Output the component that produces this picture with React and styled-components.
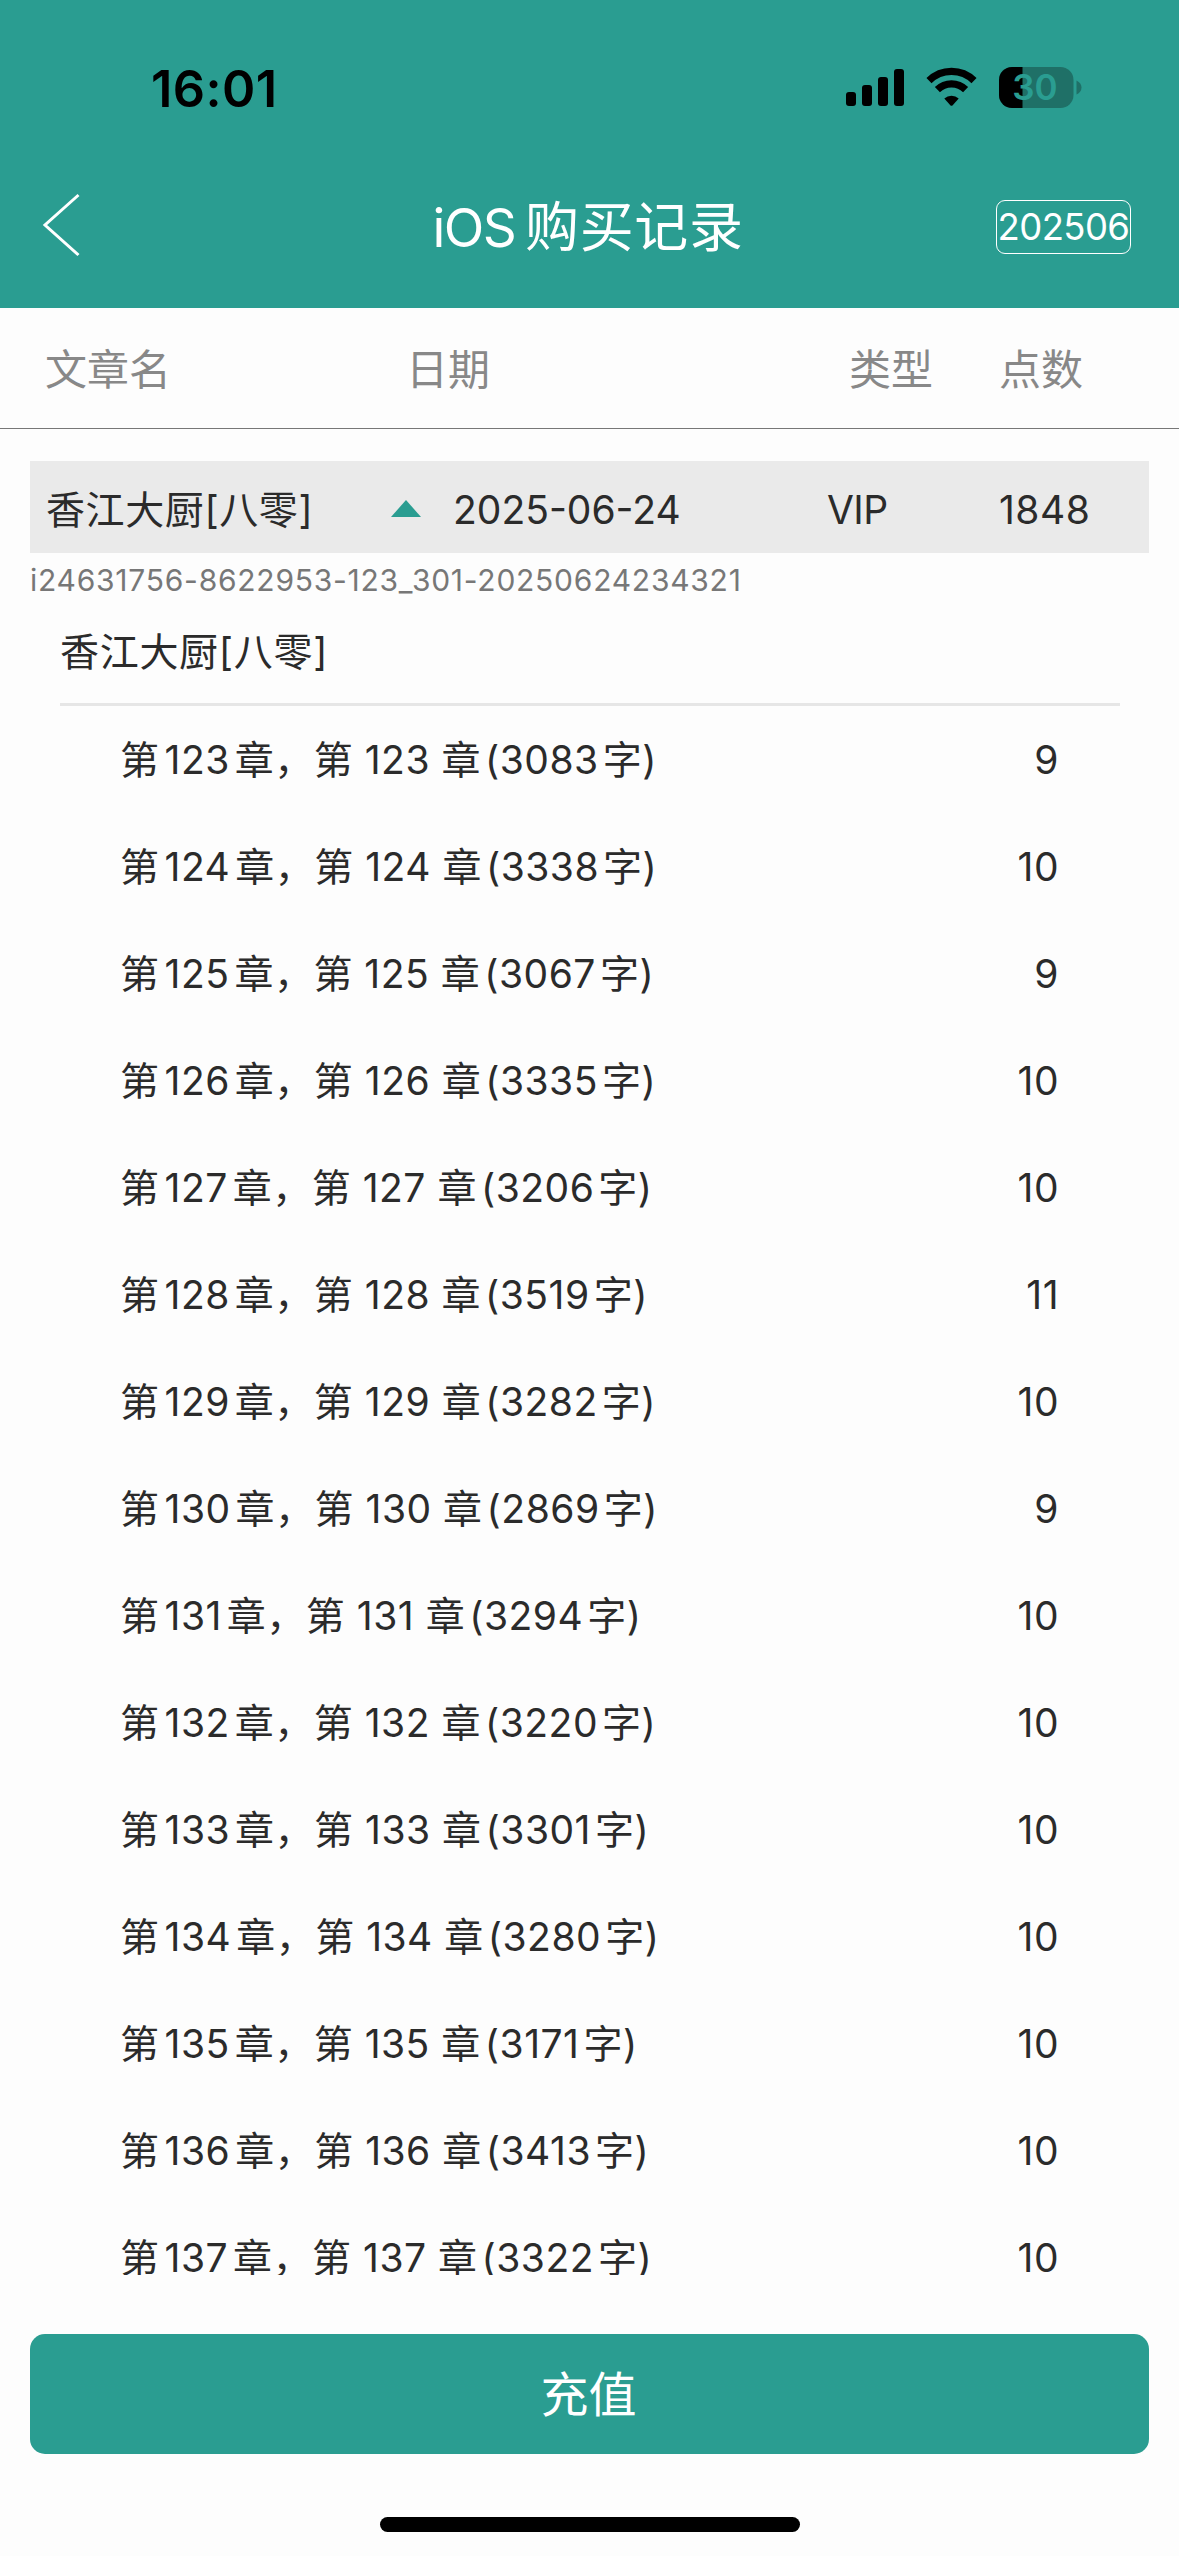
import React, { useState } from "react";
import styled, { createGlobalStyle } from "styled-components";

const chapters = [
  { no: 123, words: 3083, points: 9 },
  { no: 124, words: 3338, points: 10 },
  { no: 125, words: 3067, points: 9 },
  { no: 126, words: 3335, points: 10 },
  { no: 127, words: 3206, points: 10 },
  { no: 128, words: 3519, points: 11 },
  { no: 129, words: 3282, points: 10 },
  { no: 130, words: 2869, points: 9 },
  { no: 131, words: 3294, points: 10 },
  { no: 132, words: 3220, points: 10 },
  { no: 133, words: 3301, points: 10 },
  { no: 134, words: 3280, points: 10 },
  { no: 135, words: 3171, points: 10 },
  { no: 136, words: 3413, points: 10 },
  { no: 137, words: 3322, points: 10 },
];

const StatusIcons = () => (
  <svg width="240" height="42" viewBox="0 0 240 42">
    <rect x="4" y="25" width="10" height="14" rx="3" />
    <rect x="20" y="18" width="10" height="21" rx="3" />
    <rect x="36" y="10" width="10" height="29" rx="3" />
    <rect x="52" y="2" width="10" height="37" rx="3" />
    <g fill="none" stroke="#000" strokeWidth="7.2">
      <path d="M87 13.6a32 32 0 0 1 45 0" />
      <path d="M95.4 22.6a20 20 0 0 1 28.2 0" />
    </g>
    <path d="M102.3 31.6a10.5 10.5 0 0 1 14.4 0l-6 6.6a1.7 1.7 0 0 1-2.4 0z" />
    <clipPath id="charge">
      <rect x="157" y="0" width="23.5" height="42" />
    </clipPath>
    <rect x="157" y="0" width="74.5" height="41" rx="13" fill="#1f7067" />
    <rect x="157" y="0" width="74.5" height="41" rx="13" clipPath="url(#charge)" />
    <path d="M234.5 13.5q5 2.5 5 7t-5 7z" fill="#1f7067" />
    <text x="193" y="33" textAnchor="middle" fontSize="35" fontWeight="600" fill="#2a9d91">
      30
    </text>
  </svg>
);

const App = () => {
  const [open, setOpen] = useState(true);

  return (
    <Page>
      <GlobalStyle />
      <StatusBar>
        <Clock>16:01</Clock>
        <StatusIcons />
      </StatusBar>
      <NavBar>
        <BackBtn>
          <svg width="40" height="66" viewBox="0 0 40 66">
            <path d="M36.5 3L3 33l33.5 30" fill="none" stroke="#fff" strokeWidth="3" />
          </svg>
        </BackBtn>
        <Title>
          <TitleLatin>iOS</TitleLatin>购买记录
        </Title>
        <MonthBtn>202506</MonthBtn>
      </NavBar>
      <TableHead>
        <span>文章名</span>
        <span>日期</span>
        <span>类型</span>
        <span>点数</span>
      </TableHead>
      <List>
        <OrderRow onClick={() => setOpen(!open)}>
          <span>香江大厨[八零]</span>
          <Arrow $open={open} />
          <OrderValue>2025-06-24</OrderValue>
          <OrderValue $spacing={-0.6}>VIP</OrderValue>
          <OrderValue $spacing={0.5}>1848</OrderValue>
        </OrderRow>
        {open && (
          <>
            <OrderId>i24631756-8622953-123_301-20250624234321</OrderId>
            <BookName>香江大厨[八零]</BookName>
            {chapters.map((item) => (
              <ChapterRow key={item.no}>
                <span>
                  第<Num $left={5} $right={5}>{item.no}</Num>章，第 {item.no} 章
                  <Num $left={4} $right={4}>({item.words}</Num>字)
                </span>
                <Points>{item.points}</Points>
              </ChapterRow>
            ))}
          </>
        )}
      </List>
      <Footer>
        <RechargeBtn>充值</RechargeBtn>
        <HomeBar />
      </Footer>
    </Page>
  );
};
export default App;

const GlobalStyle = createGlobalStyle`
  * {
    box-sizing: border-box;
  }
  body {
    margin: 0;
    background-color: #fdfdfd;
  }
  button {
    font-family: inherit;
    cursor: pointer;
  }
`;

const Page = styled.div`
  display: flex;
  flex-direction: column;
  width: 1179px;
  height: 2556px;
  overflow: hidden;
  background-color: #fdfdfd;
  color: #2b2b2b;
  font-family: Inter, "Noto Sans CJK SC", sans-serif;
  white-space: nowrap;
`;

const StatusBar = styled.div`
  display: flex;
  justify-content: space-between;
  flex: none;
  height: 146px;
  padding: 67px 97px 0 151px;
  background-color: #2a9d91;
`;

const Clock = styled.span`
  color: #000;
  font-size: 50.5px;
  font-weight: 600;
  line-height: 43px;
  letter-spacing: 0.4px;
`;

const NavBar = styled.div`
  display: grid;
  grid-template-columns: 140px 1fr 140px;
  align-items: center;
  flex: none;
  height: 162px;
  padding: 0 48px 0 42px;
  background-color: #2a9d91;
  color: #fff;
`;

const BackBtn = styled.button`
  padding: 0 0 4px;
  border: none;
  background: none;
  text-align: left;
  & > svg {
    display: block;
  }
`;

const Title = styled.div`
  padding: 1px 0 0 3px;
  font-size: 54px;
  line-height: 70px;
  letter-spacing: 0.6px;
  text-align: center;
`;

const TitleLatin = styled.span`
  margin-right: 10px;
  font-size: 53px;
  letter-spacing: -1.6px;
`;

const Num = styled.span`
  margin: 0 ${(props) => props.$right}px 0 ${(props) => props.$left}px;
`;

const MonthBtn = styled.button`
  display: flex;
  align-items: center;
  justify-content: center;
  justify-self: end;
  width: 135px;
  height: 54px;
  padding: 0;
  border: 1.5px solid #fff;
  border-radius: 9px;
  background: none;
  color: #fff;
  font-size: 36.5px;
  letter-spacing: -0.6px;
`;

const TableHead = styled.div`
  display: grid;
  grid-template-columns: 361px 443px 150px 1fr;
  align-items: center;
  flex: none;
  height: 121px;
  padding: 0 0 4px 45px;
  border-bottom: 1px solid #777;
  color: #888;
  font-size: 42px;
`;

const List = styled.div`
  height: 1846px;
  padding: 32px 30px 0;
  overflow: hidden;
`;

const OrderRow = styled.div`
  display: grid;
  grid-template-columns: 345px 62px 374px 172px 1fr;
  align-items: center;
  height: 92px;
  padding-left: 16px;
  background-color: #eaeaea;
  font-size: 39px;
  letter-spacing: 0.6px;
`;

const Arrow = styled.i`
  width: 30px;
  height: 17px;
  margin-top: 3px;
  background-color: #2a9d91;
  clip-path: polygon(50% 0, 100% 100%, 0 100%);
  transform: ${(props) => (props.$open ? "none" : "rotate(180deg)")};
`;

const OrderValue = styled.span`
  padding-top: 4px;
  letter-spacing: ${(props) => props.$spacing || 0}px;
`;

const OrderId = styled.div`
  height: 54px;
  color: #777;
  font-size: 30px;
  line-height: 54px;
  letter-spacing: 0.75px;
`;

const BookName = styled.div`
  height: 99px;
  margin: 0 29px 0 30px;
  border-bottom: 3px solid #e6e6e6;
  font-size: 39px;
  line-height: 90px;
  letter-spacing: 0.7px;
`;

const ChapterRow = styled.div`
  display: flex;
  justify-content: space-between;
  height: 107px;
  padding: 0 90px;
  font-size: 39px;
  line-height: 107px;
  letter-spacing: 0.5px;
`;

const Points = styled.span`
  letter-spacing: 0.5px;
`;

const Footer = styled.div`
  display: flex;
  flex-direction: column;
  align-items: center;
  padding: 59px 30px 0;
`;

const RechargeBtn = styled.button`
  width: 100%;
  height: 120px;
  padding: 0 2px 7px 0;
  border: none;
  border-radius: 15px;
  background-color: #2a9d91;
  color: #fff;
  font-size: 48px;
`;

const HomeBar = styled.div`
  width: 420px;
  height: 15px;
  margin-top: 63px;
  border-radius: 8px;
  background-color: #000;
`;
